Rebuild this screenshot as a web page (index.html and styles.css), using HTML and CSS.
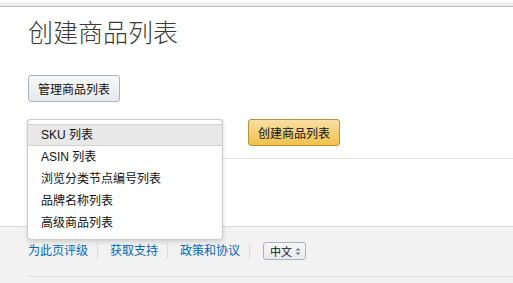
FILE: index.html
```html
<!DOCTYPE html>
<html lang="zh-CN">
  <head>
    <meta charset="UTF-8" />
    <meta name="viewport" content="width=device-width, initial-scale=1.0" />
    <title>创建商品列表</title>

    <link rel="stylesheet" href="styles.css">
  </head>
  <body>
    <div class="topbar"></div>

    <main class="page">
      <h1 class="title">创建商品列表</h1>

      <button class="btn">管理商品列表</button>

      <div class="create-row">
        <div class="picker">
          <div class="picker-box"></div>
          <ul class="picker-menu">
            <li class="active">SKU 列表</li>
            <li>ASIN 列表</li>
            <li>浏览分类节点编号列表</li>
            <li>品牌名称列表</li>
            <li>高级商品列表</li>
          </ul>
        </div>
        <button class="btn btn-gold">创建商品列表</button>
      </div>

      <hr class="rule" />
    </main>

    <footer class="footer">
      <nav class="footer-nav">
        <a href="#">为此页评级</a>
        <a href="#">获取支持</a>
        <a href="#">政策和协议</a>
        <div class="lang">
          中文
          <svg width="6" height="9" viewBox="0 0 6 9">
            <path d="M3 1 L5.5 3.5 L0.5 3.5 Z M3 8 L5.5 5.5 L0.5 5.5 Z" fill="#777" />
          </svg>
        </div>
      </nav>
      <div class="footer-line"></div>
    </footer>
  </body>
</html>
```

FILE: styles.css
```css
*,
*::before,
*::after {
  box-sizing: border-box;
  margin: 0;
  padding: 0;
}

body {
  font-family: "Liberation Sans", "Noto Sans CJK SC", sans-serif;
  font-size: 12px;
  color: #111;
  background: #fff;
  width: 513px;
  height: 283px;
  overflow: hidden;
}

.topbar {
  height: 5px;
  margin-top: 2px;
  background: #eee;
  border-bottom: 1px solid #bdbdbd;
}

.page {
  padding: 0 0 0 28px;
}

.title {
  margin-top: 11px;
  font-size: 25px;
  line-height: 30px;
  font-weight: 300;
  color: #3a3a3a;
}

.btn {
  display: block;
  height: 27px;
  padding: 0 9px;
  margin-top: 27px;
  font: inherit;
  font-size: 12px;
  color: #111;
  background: linear-gradient(#f7f8fa, #e7e9ec);
  border: 1px solid #adb1b8;
  border-radius: 3px;
}

.create-row {
  display: flex;
  align-items: flex-start;
  margin-top: 17px;
}

.create-row .btn {
  margin-top: 0;
}

.btn-gold {
  margin-left: 25px;
  background: linear-gradient(#f7dfa5, #f0c14b);
  border-color: #b8913a;
}

.picker {
  position: relative;
  width: 196px;
  margin-left: -1px;
}

.picker-box {
  height: 27px;
  border: 1px solid #ccc;
  border-radius: 3px;
}

.picker-menu {
  position: absolute;
  top: 0;
  left: 0;
  width: 196px;
  list-style: none;
  padding: 4px 0 5px;
  background: #fff;
  border: 1px solid #ccc;
  border-radius: 4px;
  box-shadow: 0 2px 4px rgba(0, 0, 0, 0.15);
}

.picker-menu li {
  height: 22px;
  line-height: 23px;
  padding-left: 13px;
  color: #111;
}

.picker-menu li.active {
  background: #e8e8e8;
  border-top: 1px solid #d2d2d2;
  border-bottom: 1px solid #d2d2d2;
  line-height: 20px;
}

.rule {
  margin-top: 12px;
  border: 0;
  border-top: 1px solid #e3e3e3;
}

.footer {
  margin-top: 67px;
  height: 60px;
  background: #f2f2f2;
  border-top: 1px solid #ddd;
  padding-left: 28px;
}

.footer-nav {
  display: flex;
  align-items: center;
  margin-top: 15px;
  height: 18px;
}

.footer-nav a {
  color: #0066c0;
  text-decoration: none;
  padding: 0 9px 0 12px;
  border-right: 1px solid #ddd;
  line-height: 16px;
}

.footer-nav a:first-child {
  padding-left: 0;
}

.lang {
  display: flex;
  align-items: center;
  gap: 3px;
  margin-left: 13px;
  height: 18px;
  padding: 0 4px 0 6px;
  font-size: 11px;
  color: #111;
  background: linear-gradient(#f7f8fa, #e7e9ec);
  border: 1px solid #adb1b8;
  border-radius: 3px;
}

.footer-line {
  margin-top: 16px;
  border-top: 1px solid #e0e0e0;
}
```
